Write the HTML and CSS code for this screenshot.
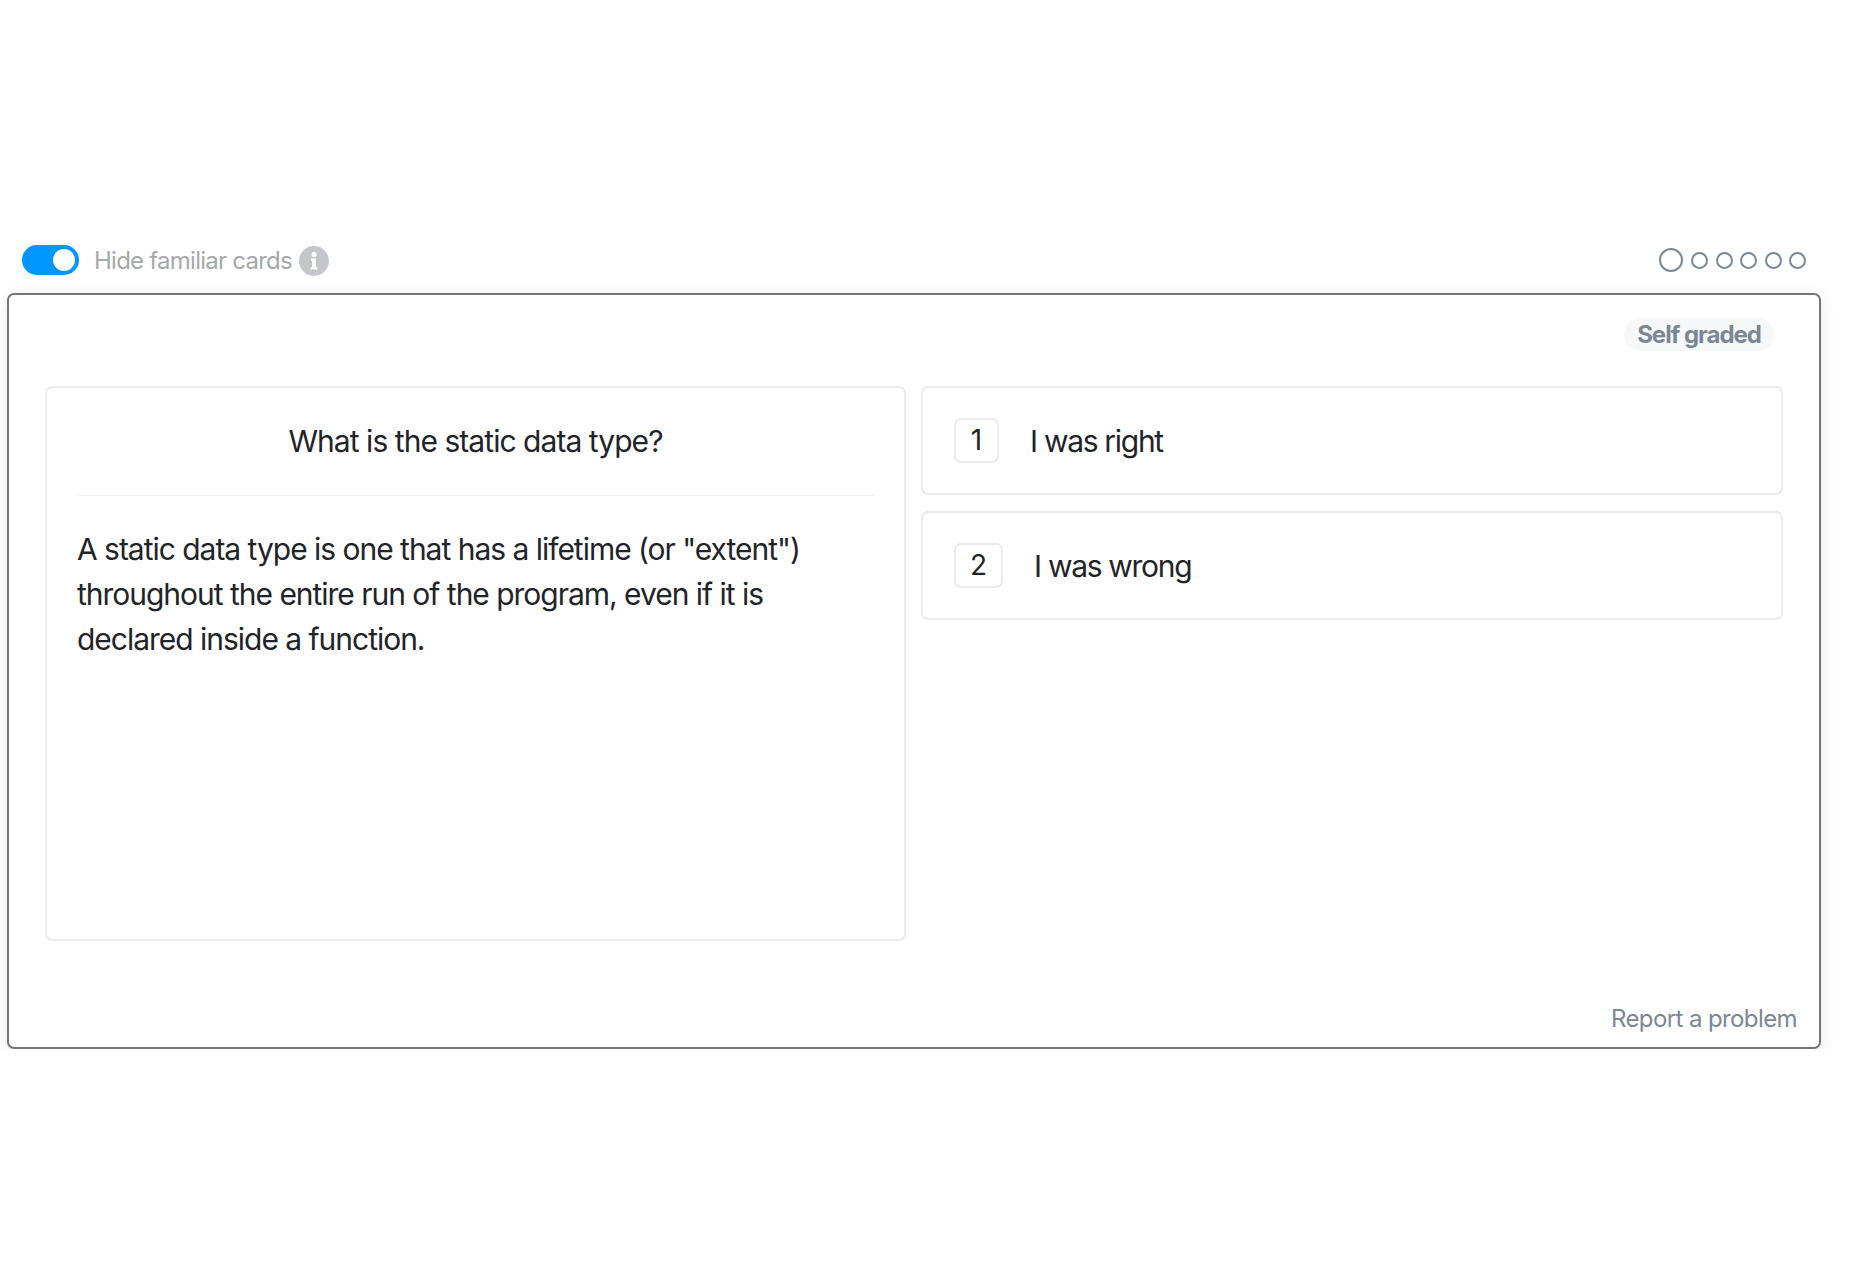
FILE: index.html
```html
<!DOCTYPE html>
<html lang="en">
<head>
    <meta charset="UTF-8">
    <title>Flashcards</title>
    <link rel="stylesheet" href="styles.css">
</head>
<body>

    <div class="page">
        <div class="topbar">
            <div class="toggle-wrap">
                <span class="toggle"><span class="knob"></span></span>
                <span class="toggle-label">Hide familiar cards</span>
                <svg class="info" viewBox="0 0 30 30" aria-hidden="true">
                    <circle cx="15" cy="15" r="15" fill="#c4c6c9"/>
                    <circle cx="15" cy="8.6" r="2.6" fill="#fff"/>
                    <path d="M12 12.6h5v8.6h1.4v2.4h-6.8v-2.4H13v-6.2h-1z" fill="#fff"/>
                </svg>
            </div>
            <div class="dots">
                <span class="dot dot-current"></span>
                <span class="dot"></span>
                <span class="dot"></span>
                <span class="dot"></span>
                <span class="dot"></span>
                <span class="dot"></span>
            </div>
        </div>

        <div class="frame">
            <div class="frame-head">
                <span class="badge">Self graded</span>
            </div>

            <div class="columns">
                <div class="card flash">
                    <div class="question">What is the static data type?</div>
                    <p class="answer">A static data type is one that has a lifetime (or "extent") throughout the entire run of the program, even if it is declared inside a function.</p>
                </div>
                <div class="choices">
                    <div class="card choice">
                        <span class="key">1</span>
                        <span class="choice-text">I was right</span>
                    </div>
                    <div class="card choice">
                        <span class="key key-wide">2</span>
                        <span class="choice-text">I was wrong</span>
                    </div>
                </div>
            </div>

            <div class="frame-foot">
                <a class="report">Report a problem</a>
            </div>
        </div>
    </div>

</body>
</html>
```

FILE: styles.css
```css
body {
    margin: 0;
    background: #fff;
    font-family: Inter, "Liberation Sans", sans-serif;
    color: #1f2429;
}

.page {
    width: 1814px;
    padding: 244px 0 0 7px;
}

/* Top row */
.topbar {
    display: flex;
    justify-content: space-between;
    align-items: center;
    height: 32px;
    padding: 0 15px;
    margin-bottom: 17px;
}

.toggle-wrap {
    display: flex;
    align-items: center;
}

.toggle {
    display: block;
    position: relative;
    width: 57px;
    height: 30px;
    border-radius: 15px;
    background: #0096ff;
    margin-right: 15px;
}

.knob {
    position: absolute;
    top: 4px;
    right: 4px;
    width: 22px;
    height: 22px;
    border-radius: 50%;
    background: #fff;
}

.toggle-label {
    font-size: 24px;
    letter-spacing: -0.75px;
    color: #a6a8aa;
    margin-right: 7px;
}

.info {
    width: 30px;
    height: 30px;
    margin-top: 2px;
}

.dots {
    display: flex;
    align-items: center;
    gap: 7.5px;
}

.dot {
    box-sizing: border-box;
    width: 17px;
    height: 17px;
    border: 2px solid #7b8794;
    border-radius: 50%;
}

.dot-current {
    width: 24px;
    height: 24px;
    margin-right: 1px;
}

/* Card frame */
.frame {
    box-sizing: border-box;
    height: 756px;
    border: 2px solid #757575;
    border-radius: 7px;
    box-shadow: 0 4px 16px rgba(0, 0, 0, 0.1);
    padding: 23px 36px 0 36px;
}

.frame-head {
    display: flex;
    justify-content: flex-end;
    height: 33px;
    margin-bottom: 35px;
}

.badge {
    padding: 0 13px;
    margin-right: 9px;
    line-height: 33px;
    border-radius: 17px;
    background: #f6f7f9;
    font-size: 24px;
    font-weight: 700;
    letter-spacing: -1px;
    color: #7a8794;
}

.columns {
    display: flex;
    gap: 15px;
}

.card {
    box-sizing: border-box;
    border: 2px solid #e8ebef;
    border-radius: 7px;
    background: #fff;
}

.flash {
    width: 861px;
    height: 555px;
    padding: 0 30px;
}

.question {
    height: 107px;
    line-height: 107px;
    text-align: center;
    font-size: 30px;
    letter-spacing: -0.95px;
    border-bottom: 1px solid #eef0f3;
}

.answer {
    margin: 31px 0 0;
    font-size: 30px;
    line-height: 45px;
    letter-spacing: -1.02px;
}

.choices {
    display: flex;
    flex-direction: column;
    gap: 16px;
    width: 862px;
}

.choice {
    display: flex;
    align-items: center;
    gap: 31px;
    height: 109px;
    padding: 0 31px;
    font-size: 30px;
    letter-spacing: -1.3px;
}

.key {
    box-sizing: border-box;
    width: 45px;
    height: 45px;
    line-height: 41px;
    text-align: center;
    border: 2px solid #e8ebef;
    border-radius: 7px;
    font-size: 28px;
    letter-spacing: 0;
}

.key-wide {
    width: 49px;
}

.frame-foot {
    display: flex;
    justify-content: flex-end;
    margin-right: -14px;
    padding-top: 63px;
}

.report {
    font-size: 24px;
    letter-spacing: -0.6px;
    color: #7b8794;
}
```
